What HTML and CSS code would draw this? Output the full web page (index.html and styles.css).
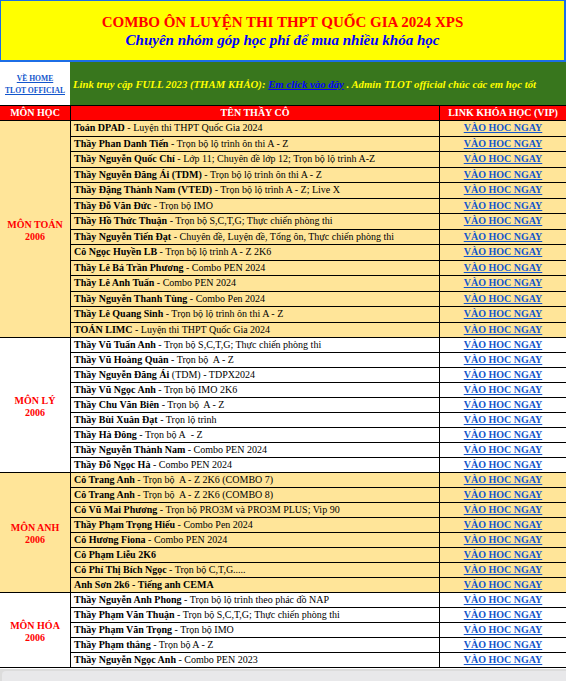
FILE: index.html
```html
<!DOCTYPE html>
<html lang="vi">
<head>
<meta charset="utf-8">
<title>Combo ôn luyện thi THPT Quốc Gia 2024 XPS</title>
<link rel="stylesheet" href="styles.css">
</head>
<body>
<div class="banner">
  <div class="title">COMBO ÔN LUYỆN THI THPT QUỐC GIA 2024 XPS</div>
  <div class="subtitle">Chuyên nhóm góp học phí để mua nhiều khóa học</div>
</div>
<div class="sheet">
  <div class="home"><a href="#">VỀ HOME<br>TLOT OFFICIAL</a></div>
  <div class="notice"><span>Link truy cập FULL 2023 (THAM KHẢO): <a href="#">Em click vào đây</a> . Admin TLOT official chúc các em học tốt</span></div>

  <div class="hd first">MÔN HỌC</div>
  <div class="hd">TÊN THẦY CÔ</div>
  <div class="hd">LINK KHÓA HỌC (VIP)</div>

  <div class="subj y s14"><span>MÔN TOÁN<br>2006</span></div>
  <div class="nm y"><b>Toán DPAD</b> - Luyện thi THPT Quốc Gia 2024</div><div class="ln y"><a href="#">VÀO HOC NGAY</a></div>
  <div class="nm y"><b>Thầy Phan Danh Tiến</b> - Trọn bộ lộ trình ôn thi A - Z</div><div class="ln y"><a href="#">VÀO HOC NGAY</a></div>
  <div class="nm y"><b>Thầy Nguyễn Quốc Chí</b> - Lớp 11; Chuyên đề lớp 12; Trọn bộ lộ trình A-Z</div><div class="ln y"><a href="#">VÀO HOC NGAY</a></div>
  <div class="nm y"><b>Thầy Nguyễn Đăng Ái (TDM)</b> - Trọn bộ lộ trình ôn thi A - Z</div><div class="ln y"><a href="#">VÀO HOC NGAY</a></div>
  <div class="nm y"><b>Thầy Đặng Thành Nam (VTED)</b> - Trọn bộ lộ trình A - Z; Live X</div><div class="ln y"><a href="#">VÀO HOC NGAY</a></div>
  <div class="nm y"><b>Thầy Đỗ Văn Đức</b> - Trọn bộ IMO</div><div class="ln y"><a href="#">VÀO HOC NGAY</a></div>
  <div class="nm y"><b>Thầy Hồ Thức Thuận</b> - Trọn bộ S,C,T,G; Thực chiến phòng thi</div><div class="ln y"><a href="#">VÀO HOC NGAY</a></div>
  <div class="nm y"><b>Thầy Nguyễn Tiến Đạt</b> - Chuyên đề, Luyện đề, Tổng ôn, Thực chiến phòng thi</div><div class="ln y"><a href="#">VÀO HOC NGAY</a></div>
  <div class="nm y"><b>Cô Ngọc Huyền LB</b> - Trọn bộ lộ trình A - Z 2K6</div><div class="ln y"><a href="#">VÀO HOC NGAY</a></div>
  <div class="nm y"><b>Thầy Lê Bá Trần Phương</b> - Combo PEN 2024</div><div class="ln y"><a href="#">VÀO HOC NGAY</a></div>
  <div class="nm y"><b>Thầy Lê Anh Tuấn</b> - Combo PEN 2024</div><div class="ln y"><a href="#">VÀO HOC NGAY</a></div>
  <div class="nm y"><b>Thầy Nguyễn Thanh Tùng</b> - Combo Pen 2024</div><div class="ln y"><a href="#">VÀO HOC NGAY</a></div>
  <div class="nm y"><b>Thầy Lê Quang Sinh</b> - Trọn bộ lộ trình ôn thi A - Z</div><div class="ln y"><a href="#">VÀO HOC NGAY</a></div>
  <div class="nm y"><b>TOÁN LIMC</b> - Luyện thi THPT Quốc Gia 2024</div><div class="ln y"><a href="#">VÀO HOC NGAY</a></div>

  <div class="subj s9"><span>MÔN LÝ<br>2006</span></div>
  <div class="nm"><b>Thầy Vũ Tuấn Anh</b> - Trọn bộ S,C,T,G; Thực chiến phòng thi</div><div class="ln"><a href="#">VÀO HOC NGAY</a></div>
  <div class="nm"><b>Thầy Vũ Hoàng Quân</b> - Trọn bộ&nbsp; A - Z</div><div class="ln"><a href="#">VÀO HOC NGAY</a></div>
  <div class="nm"><b>Thầy Nguyễn Đăng Ái</b> (TDM) - TDPX2024</div><div class="ln"><a href="#">VÀO HOC NGAY</a></div>
  <div class="nm"><b>Thầy Vũ Ngọc Anh</b> - Trọn bộ IMO 2K6</div><div class="ln"><a href="#">VÀO HOC NGAY</a></div>
  <div class="nm"><b>Thầy Chu Văn Biên</b> - Trọn bộ&nbsp; A - Z</div><div class="ln"><a href="#">VÀO HOC NGAY</a></div>
  <div class="nm"><b>Thầy Bùi Xuân Đạt</b> - Trọn lộ trình</div><div class="ln"><a href="#">VÀO HOC NGAY</a></div>
  <div class="nm"><b>Thầy Hà Đông</b> - Trọn bộ A&nbsp; - Z</div><div class="ln"><a href="#">VÀO HOC NGAY</a></div>
  <div class="nm"><b>Thầy Nguyễn Thành Nam</b> - Combo PEN 2024</div><div class="ln"><a href="#">VÀO HOC NGAY</a></div>
  <div class="nm"><b>Thầy Đỗ Ngọc Hà</b> - Combo PEN 2024</div><div class="ln"><a href="#">VÀO HOC NGAY</a></div>

  <div class="subj y s8"><span>MÔN ANH<br>2006</span></div>
  <div class="nm y"><b>Cô Trang Anh</b> - Trọn bộ&nbsp; A - Z 2K6 (COMBO 7)</div><div class="ln y"><a href="#">VÀO HOC NGAY</a></div>
  <div class="nm y"><b>Cô Trang Anh</b> - Trọn bộ&nbsp; A - Z 2K6 (COMBO 8)</div><div class="ln y"><a href="#">VÀO HOC NGAY</a></div>
  <div class="nm y"><b>Cô Vũ Mai Phương</b> - Trọn bộ PRO3M và PRO3M PLUS; Vip 90</div><div class="ln y"><a href="#">VÀO HOC NGAY</a></div>
  <div class="nm y"><b>Thầy Phạm Trọng Hiếu</b> - Combo Pen 2024</div><div class="ln y"><a href="#">VÀO HOC NGAY</a></div>
  <div class="nm y"><b>Cô Hương Fiona</b> - Combo PEN 2024</div><div class="ln y"><a href="#">VÀO HOC NGAY</a></div>
  <div class="nm y"><b>Cô Phạm Liễu 2K6</b></div><div class="ln y"><a href="#">VÀO HOC NGAY</a></div>
  <div class="nm y"><b>Cô Phí Thị Bích Ngọc</b> - Trọn bộ C,T,G.....</div><div class="ln y"><a href="#">VÀO HOC NGAY</a></div>
  <div class="nm y"><b>Anh Sơn 2k6 - Tiếng anh CEMA</b></div><div class="ln y"><a href="#">VÀO HOC NGAY</a></div>

  <div class="subj s5"><span>MÔN HÓA<br>2006</span></div>
  <div class="nm"><b>Thầy Nguyễn Anh Phong</b> - Trọn bộ lộ trình theo phác đồ NAP</div><div class="ln"><a href="#">VÀO HOC NGAY</a></div>
  <div class="nm"><b>Thầy Phạm Văn Thuận</b> - Trọn bộ S,C,T,G; Thực chiến phòng thi</div><div class="ln"><a href="#">VÀO HOC NGAY</a></div>
  <div class="nm"><b>Thầy Phạm Văn Trọng</b> - Trọn bộ IMO</div><div class="ln"><a href="#">VÀO HOC NGAY</a></div>
  <div class="nm"><b>Thầy Phạm thắng</b> - Trọn bộ A - Z</div><div class="ln"><a href="#">VÀO HOC NGAY</a></div>
  <div class="nm"><b>Thầy Nguyễn Ngọc Anh</b> - Combo PEN 2023</div><div class="ln"><a href="#">VÀO HOC NGAY</a></div>
</div>
<div class="hscroll"><div class="thumb"></div></div>
</body>
</html>
```
FILE: styles.css
```css
html, body {
  margin: 0;
  padding: 0;
  background: #ffffff;
  overflow: hidden;
}
body {
  font-family: "Liberation Serif", "Times New Roman", serif;
  font-size: 10px;
  color: #000;
}
.banner {
  box-sizing: border-box;
  height: 62px;
  background: #ffff00;
  border-style: solid;
  border-color: #1c6ee6;
  border-width: 1px 2px 2px 1px;
  text-align: center;
  padding-top: 12px;
}
.title {
  color: #ff0000;
  font-weight: bold;
  font-size: 15px;
  line-height: 18px;
}
.subtitle {
  color: #0000ff;
  font-weight: bold;
  font-style: italic;
  font-size: 15px;
  line-height: 18px;
}
.sheet {
  display: grid;
  grid-template-columns: 70px 369px 127px;
  grid-template-rows: 43px 16px repeat(14, 15.5px) repeat(22, 15px);
}
.sheet > div {
  box-sizing: border-box;
  white-space: nowrap;
  overflow: hidden;
}
.home {
  background: #fff;
  display: flex;
  align-items: center;
  justify-content: center;
  text-align: center;
  font-size: 7.6px;
  font-weight: bold;
  line-height: 12px;
  padding-top: 2px;
}
.home a { color: #1155cc; }
.notice {
  grid-column: span 2;
  background: #38761d;
  color: #ffff00;
  font-size: 10.75px;
  font-weight: bold;
  font-style: italic;
  padding-left: 3px;
  display: flex;
  align-items: center;
}
.notice a { color: #0000ff; }
.hd {
  background: #ff0000;
  color: #fff;
  font-weight: bold;
  text-align: center;
  line-height: 14px;
  border-top: 1px solid #000;
  border-bottom: 1px solid #000;
  border-left: 1px solid #000;
}
.hd.first { border-left: none; }
.subj {
  color: #ff0000;
  font-weight: bold;
  display: flex;
  align-items: center;
  justify-content: center;
  text-align: center;
  line-height: 12px;
  padding-top: 3px;
  border-bottom: 1px solid #000;
}
.s14 { grid-row: span 14; }
.s9 { grid-row: span 9; }
.s8 { grid-row: span 8; }
.s5 { grid-row: span 5; }
.nm {
  border-left: 1px solid #000;
  border-bottom: 1px solid #000;
  padding-left: 3px;
  line-height: 14px;
}
.ln {
  border-left: 1px solid #000;
  border-bottom: 1px solid #000;
  text-align: center;
  font-weight: bold;
  line-height: 14px;
}
.ln a { color: #1155cc; }
.y { background: #ffe599; }
.hscroll {
  position: fixed;
  left: 0;
  right: 0;
  bottom: 0;
  height: 12px;
  background: #dcdcdc;
  padding: 2px 0 0 2px;
  box-sizing: border-box;
}
.thumb {
  height: 10px;
  background: #e8e8ea;
  border-radius: 4px 0 0 0;
}
```
